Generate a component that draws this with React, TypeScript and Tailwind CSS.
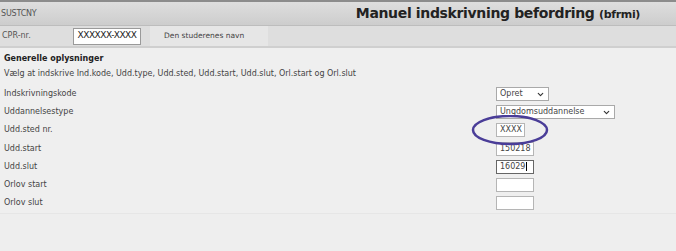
import { ChevronDown } from "lucide-react";

const FONT = "font-['DejaVu_Sans',Verdana,sans-serif]";

const ROWS = [
  "Indskrivningskode",
  "Uddannelsestype",
  "Udd.sted nr.",
  "Udd.start",
  "Udd.slut",
  "Orlov start",
  "Orlov slut",
];

function Select({ value, width }: { value: string; width: string }) {
  return (
    <div
      className={`${width} h-[14px] flex items-center justify-between bg-white border border-[#a9a9a9] pl-[3px] pr-[3px] text-[8px] text-[#444]`}
    >
      <span className="leading-none">{value}</span>
      <ChevronDown size={9} strokeWidth={3} className="text-[#333]" />
    </div>
  );
}

function Field({
  value,
  width = "w-[38px]",
  focused,
}: {
  value?: string;
  width?: string;
  focused?: boolean;
}) {
  return (
    <div
      className={`${width} h-[14px] flex items-center bg-white px-[3px] text-[8px] leading-none text-[#444] border ${
        focused ? "border-[#666]" : "border-[#b5b5b5]"
      }`}
    >
      {value}
      {focused && <span className="ml-[1px] w-px h-[9px] bg-black" />}
    </div>
  );
}

export default function App() {
  return (
    <div className={`w-[676px] h-[251px] bg-[#eeeeee] flex flex-col ${FONT}`}>
      {/* Header */}
      <div className="h-[2px] bg-[#8c8c8c]" />
      <div className="h-[24px] flex items-center justify-between bg-gradient-to-b from-[#dedede] to-[#cdcdcd] border-b border-[#bdbdbd]">
        <span className="text-[8px] text-[#555] pl-[1px] tracking-tight">SUSTCNY</span>
        <span className="pr-[36px] text-[14px] font-bold text-[#222] tracking-tight">
          Manuel indskrivning befordring{" "}
          <span className="text-[11px]">(bfrmi)</span>
        </span>
      </div>

      {/* CPR row */}
      <div className="h-[22px] flex items-center bg-[#dedede] border-b-2 border-[#cfcfcf]">
        <span className="w-[73px] pl-[2px] text-[8px] text-[#555]">CPR-nr.</span>
        <div className="w-[68px] h-[17px] flex items-center justify-center bg-white border border-[#9a9a9a] text-[9px] text-[#222] tracking-tighter whitespace-nowrap">
          XXXXXX-XXXX
        </div>
        <div className="ml-[9px] w-[118px] self-stretch flex items-center bg-[#e6e6e6] pl-[14px] text-[7.5px] text-[#444]">
          Den studerenes navn
        </div>
      </div>

      {/* Content */}
      <div className="h-[166px] bg-[#efefef] border-b border-[#e6e6e6] pt-[4px] pl-[4px] text-[8px] text-[#444]">
        <div className="font-bold text-[#222] h-[13px] flex items-center">Generelle oplysninger</div>
        <div className="h-[17px] flex items-center">
          Vælg at indskrive Ind.kode, Udd.type, Udd.sted, Udd.start, Udd.slut, Orl.start og Orl.slut
        </div>
        <div className="pt-[3px] grid grid-cols-[492px_1fr] auto-rows-[18.2px] items-center">
          <span>{ROWS[0]}</span>
          <Select value="Opret" width="w-[53px]" />
          <span>{ROWS[1]}</span>
          <Select value="Ungdomsuddannelse" width="w-[119px]" />
          <span>{ROWS[2]}</span>
          <div className="relative">
            <Field value="XXXX" width="w-[29px]" />
            <svg
              className="absolute left-[-25px] top-[-8px]"
              width="80"
              height="32"
              viewBox="0 0 80 32"
            >
              <ellipse
                cx="39"
                cy="15"
                rx="37"
                ry="14"
                fill="none"
                stroke="#4a3d98"
                strokeWidth="2.5"
              />
            </svg>
          </div>
          <span>{ROWS[3]}</span>
          <Field value="150218" />
          <span>{ROWS[4]}</span>
          <Field value="16029" focused />
          <span>{ROWS[5]}</span>
          <Field />
          <span>{ROWS[6]}</span>
          <Field />
        </div>
      </div>
    </div>
  );
}
